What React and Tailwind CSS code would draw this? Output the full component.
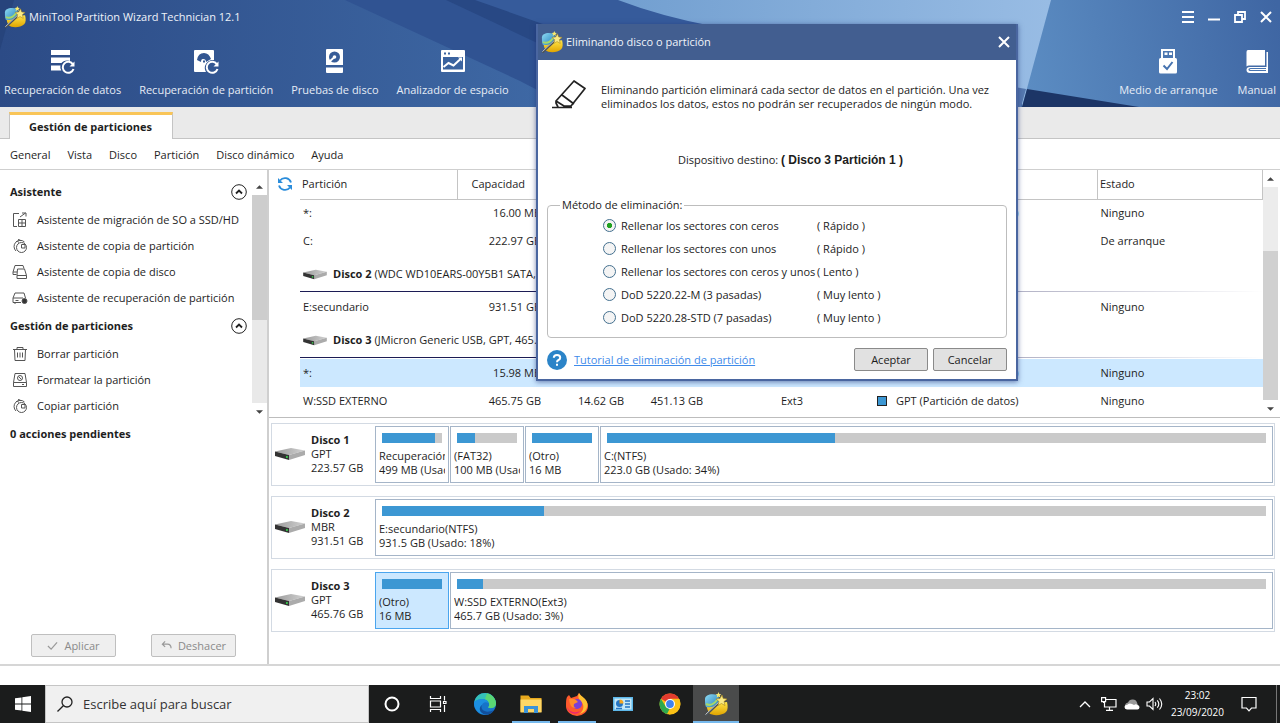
import React, { useState } from 'react'

const wizardItems = [
    { label: 'Asistente de migración de SO a SSD/HD', icon: 'migrate' },
    { label: 'Asistente de copia de partición', icon: 'pie' },
    { label: 'Asistente de copia de disco', icon: 'copyDisk' },
    { label: 'Asistente de recuperación de partición', icon: 'recover' },
]

const manageItems = [
    { label: 'Borrar partición', icon: 'trash' },
    { label: 'Formatear la partición', icon: 'format' },
    { label: 'Copiar partición', icon: 'pie' },
]

const menuItems = ['General', 'Vista', 'Disco', 'Partición', 'Disco dinámico', 'Ayuda']

const rows = [
    { name: '*:', size: '16.00 MB', type: 'GPT (Partición de datos)', status: 'Ninguno' },
    { name: 'C:', size: '222.97 GB', status: 'De arranque' },
    { disk: 'Disco 2', info: '(WDC WD10EARS-00Y5B1 SATA, MBR)' },
    { name: 'E:secundario', size: '931.51 GB', status: 'Ninguno' },
    { disk: 'Disco 3', info: '(JMicron Generic USB, GPT, 465.76 GB)' },
    { name: '*:', size: '15.98 MB', type: 'GPT (Partición de datos)', status: 'Ninguno', selected: true },
    { name: 'W:SSD EXTERNO', size: '465.75 GB', used: '14.62 GB', free: '451.13 GB', fs: 'Ext3', type: 'GPT (Partición de datos)', status: 'Ninguno' },
]

const disks = [
    {
        name: 'Disco 1', scheme: 'GPT', size: '223.57 GB',
        parts: [
            { title: 'Recuperación', text: '499 MB (Usado: 88%)', used: 88 },
            { title: '(FAT32)', text: '100 MB (Usado: 30%)', used: 30 },
            { title: '(Otro)', text: '16 MB', used: 100 },
            { title: 'C:(NTFS)', text: '223.0 GB (Usado: 34%)', used: 34.6, wide: true },
        ],
    },
    {
        name: 'Disco 2', scheme: 'MBR', size: '931.51 GB',
        parts: [{ title: 'E:secundario(NTFS)', text: '931.5 GB (Usado: 18%)', used: 18.3, wide: true }],
    },
    {
        name: 'Disco 3', scheme: 'GPT', size: '465.76 GB',
        parts: [
            { title: '(Otro)', text: '16 MB', used: 100, selected: true },
            { title: 'W:SSD EXTERNO(Ext3)', text: '465.7 GB (Usado: 3%)', used: 3.2, wide: true },
        ],
    },
]

const methods = [
    { id: 'zeros', label: 'Rellenar los sectores con ceros', speed: '( Rápido )' },
    { id: 'ones', label: 'Rellenar los sectores con unos', speed: '( Rápido )' },
    { id: 'both', label: 'Rellenar los sectores con ceros y unos', speed: '( Lento )' },
    { id: 'dod3', label: 'DoD 5220.22-M (3 pasadas)', speed: '( Muy lento )' },
    { id: 'dod7', label: 'DoD 5220.28-STD (7 pasadas)', speed: '( Muy lento )' },
]

const Logo = ({ className }) => (
    <svg viewBox="0 0 24 24" className={className} aria-hidden="true">
        <defs>
            <linearGradient id="logoBlue" x1="0" y1="0" x2="1" y2="1">
                <stop offset="0" stopColor="#8fdcf4" />
                <stop offset="1" stopColor="#1673b4" />
            </linearGradient>
            <linearGradient id="logoGold" x1="0" y1="0" x2="0" y2="1">
                <stop offset="0" stopColor="#ffe64a" />
                <stop offset="1" stopColor="#e0a400" />
            </linearGradient>
        </defs>
        <path d="M1 7c0-4 6-6 13-4l2 7-8 7-6-2c-1-2-1-5-1-8z" fill="url(#logoBlue)" />
        <path d="M3 15c4 1 8 0 11-4l9-1c1 4 1 8-1 10-4 4-14 4-17 1-1-2-2-4-2-6z" fill="url(#logoGold)" />
        <path d="M2 12c4 2 8 0 11-4" stroke="#a6d86a" strokeWidth="2" fill="none" />
        <path d="M1.500 23.500L17 9" stroke="#4c5256" strokeWidth="2.200" />
        <path d="M1.500 22.500L16 9" stroke="#dfe3e6" strokeWidth=".8" />
        <path d="M18 3l1.200 3.500 3.800.5-3 2.500 1 4-3.500-2-3.500 2 1-4-3-2.500 4-.5z" fill="#f9ea86" stroke="#a8861a" strokeWidth=".6" />
        <path d="M14.500 0l.8 2 2 .2-1.500 1.300.5 2-1.800-1.100-1.800 1.100.5-2-1.500-1.300 2-.2z" fill="#f9ea6e" />
    </svg>
)

const DiskIcon = ({ className }) => (
    <svg viewBox="0 0 30 14" className={className} aria-hidden="true">
        <defs>
            <linearGradient id="diskTop" x1="0" y1="0" x2="1" y2="0">
                <stop offset="0" stopColor="#9a9a9a" />
                <stop offset="1" stopColor="#d2d2d2" />
            </linearGradient>
        </defs>
        <path d="M0 4.500L16 1l14 2.500L14 8z" fill="url(#diskTop)" />
        <path d="M30 3.500V8L14 13V8z" fill="#ababab" />
        <path d="M0 4.500L14 8v5L0 9z" fill="#333" />
        <rect x="11" y="9" width="1.800" height="2" fill="#35c24a" />
    </svg>
)

const sideIcons = {
    migrate: (
        <>
            <path d="M7 1.500H1.500v13H5" />
            <path d="M6.500 7.500h7v7h-7zM10 7.500v7M6.500 11h7M8 5l5.500-4M10 1h4v3.500" />
        </>
    ),
    pie: (
        <>
            <path d="M4 13A6 6 0 1 1 12.500 4M4 3.500q2-.5 3 1M6 1.500q2 0 3 1.500" />
            <circle cx="9.500" cy="9.500" r="5" />
            <path d="M9.500 6.500v3.500h3.500v-3.500z" />
        </>
    ),
    copyDisk: (
        <>
            <path d="M4.500 10.500H1V8l2-6.500h8l1 3" />
            <path d="M5.500 5h7l2 6.500v3h-9.500v-3zM5 11.500h9.500M1 8h4" />
        </>
    ),
    recover: (
        <>
            <path d="M9 12.500H1V8l2-5h9l1.500 5M1 8h10M3 12.500v1.500M3.500 10.500h3" />
            <circle cx="12.500" cy="11" r="2.500" fill="#333" />
        </>
    ),
    trash: <path d="M1 3.500h14M5 3.500V1.500h6v2M2.500 3.500l.5 11h10l.5-11M5.500 6.500v5M8 6.500v5M10.500 6.500v5" />,
    format: (
        <>
            <path d="M3 1.500h10l1.500 9v4h-13v-4zM1.500 10.500h13M10 12.500h2" />
            <circle cx="8" cy="6" r="2.500" />
            <path d="M6.500 4.500l3 3" />
        </>
    ),
}

const SideIcon = ({ name }) => (
    <svg viewBox="0 0 16 16" className="w-4 h-4 shrink-0" fill="none" stroke="#555" strokeWidth="1" aria-hidden="true">
        {sideIcons[name]}
    </svg>
)

const toolIcons = {
    data: (
        <>
            <path d="M1 1h19v5H1zM1 8.500h19v3.500c-4-1-7 0-8.500 2H1zM1 16.500h9.500c-.5 2 0 3.500.8 5H1z" fill="#fff" />
            <path d="M23 15.500a5.500 5.500 0 1 0 .5 4.500" fill="none" stroke="#fff" strokeWidth="2" />
            <path d="M24.500 12.500v5h-5z" fill="#fff" />
        </>
    ),
    partition: (
        <>
            <path fillRule="evenodd" d="M2 1h18q1 0 1 1v9a8 8 0 0 0-8 12H2q-1 0-1-1V2q0-1 1-1zM4 11q1-7 7-7 5 0 7 6l-5 3q0-3-3-3-2 0-2 3zM10 11.500l2 0 0 2-2 0z" fill="#fff" />
            <path d="M24 15.500a5.500 5.500 0 1 0 .5 4.500" fill="none" stroke="#fff" strokeWidth="2" />
            <path d="M25.500 12.500v5h-5z" fill="#fff" />
        </>
    ),
    test: (
        <>
            <path fillRule="evenodd" d="M5 0h15q1 0 1 1v15H4V1q0-1 1-1zM12.500 2.500a5.500 5.500 0 1 0 0 11 5.500 5.500 0 0 0 0-11z" fill="#fff" />
            <circle cx="12.500" cy="8" r="1.800" fill="#fff" />
            <path d="M12 8.500L7 13" stroke="#fff" strokeWidth="1.800" />
            <path d="M4 18.500h17v4.500q0 1-1 1H5q-1 0-1-1z" fill="#fff" />
        </>
    ),
    space: (
        <>
            <path fillRule="evenodd" d="M2 1h22q1 0 1 1v20q0 1-1 1H2q-1 0-1-1V2q0-1 1-1zM3 8v12.500h20V8zM4 3.500v2h2v-2zM8 3.500v2h2v-2z" fill="#fff" />
            <path d="M3.500 18l5-4 5 2.500 7-6.500" fill="none" stroke="#fff" strokeWidth="2" />
            <path d="M18 8.500h4v4z" fill="#fff" />
        </>
    ),
    usb: (
        <>
            <path fillRule="evenodd" d="M6 0h14v9H6zM8 2v7h10V2z" fill="#fff" />
            <path d="M9.500 3.500h3v2.500h-3zM14 3.500h3v2.500h-3z" fill="#fff" />
            <path d="M5.500 9h15q1.500 0 1.500 1.500V23q0 1.500-1.500 1.500h-15Q4 24.500 4 23V10.500Q4 9 5.500 9z" fill="#fff" />
            <path d="M8.500 16.500l3.500 3.500 5.500-7" fill="none" stroke="#4673b0" strokeWidth="2" />
        </>
    ),
    manual: (
        <>
            <path d="M4 1h17v15.500H5q-1.500 0-2.500 1V3q0-2 1.500-2z" fill="#fff" />
            <path d="M22.500 3H24v21H6q-3.500 0-3.500-3 0-3 3.500-3h16.500z" fill="#fff" />
            <path d="M22 19.500H6.500q-1.500 0-1.500 1t1.500 1H22" fill="none" stroke="#4673b0" strokeWidth="1.200" />
        </>
    ),
}

const ToolButton = ({ icon, label }) => (
    <button className="flex flex-col items-center gap-[7px] whitespace-nowrap text-[11px] leading-4 text-[#e6ecf6]">
        <svg viewBox="0 0 26 26" className="w-[26px] h-[26px]" aria-hidden="true">{toolIcons[icon]}</svg>
        {label}
    </button>
)

const HeaderArt = () => (
    <svg viewBox="0 0 1280 107" preserveAspectRatio="none" className="absolute inset-0 w-full h-full" aria-hidden="true">
        <defs>
            <linearGradient id="artBase" gradientUnits="userSpaceOnUse" x1="0" y1="50" x2="540" y2="70">
                <stop offset="0" stopColor="#2c4b86" />
                <stop offset="1" stopColor="#3e68a4" />
            </linearGradient>
            <linearGradient id="artSky" gradientUnits="userSpaceOnUse" x1="620" y1="0" x2="1050" y2="0">
                <stop offset="0" stopColor="#729fd0" />
                <stop offset="1" stopColor="#98bce4" />
            </linearGradient>
            <linearGradient id="artRight" gradientUnits="userSpaceOnUse" x1="1025" y1="70" x2="1280" y2="20">
                <stop offset="0" stopColor="#5b8cc2" />
                <stop offset="1" stopColor="#3f66a3" />
            </linearGradient>
        </defs>
        <path d="M0 0h1060v107H0z" fill="url(#artBase)" />
        <path d="M0 0h14L0 50z" fill="#27447c" />
        <path d="M345 0h420v107H570L520 81z" fill="#305392" />
        <path d="M446 0h200v80h-30z" fill="#284884" />
        <path d="M475 0h250v60h-80z" fill="#365b9b" />
        <path d="M618 0Q660 16 712 26L900 70l122 22V107h30V0z" fill="url(#artSky)" />
        <path d="M1051 0h229v107H1022z" fill="url(#artRight)" />
        <path d="M1010 86l16 3-5 18h-11z" fill="#5578ae" />
        <path d="M1027 89l112 18H1022z" fill="#1c3566" />
    </svg>
)

const ScrollArrow = ({ down, label }) => (
    <button aria-label={label} className="h-[17px] w-full flex items-center justify-center">
        <svg viewBox="0 0 8 4" className="w-[7px] h-1" aria-hidden="true">
            <path d={down ? 'M0 0h8L4 4z' : 'M0 4h8L4 0z'} fill="#444" />
        </svg>
    </button>
)

const SideSection = ({ title, items }) => (
    <section>
        <h2 className="h-7 pl-[10px] pr-[5px] flex items-center justify-between font-bold">
            {title}
            <button aria-label={`Contraer ${title}`}>
                <svg viewBox="0 0 16 16" className="w-4 h-4" fill="none" stroke="#222" aria-hidden="true">
                    <circle cx="8" cy="8" r="7.300" />
                    <path d="M5 9.500l3-3 3 3" strokeWidth="1.800" />
                </svg>
            </button>
        </h2>
        <ul className="py-px">
            {items.map((item) => (
                <li key={item.label}>
                    <button className="h-[26px] pl-3 flex items-center gap-[9px] whitespace-nowrap">
                        <SideIcon name={item.icon} />
                        {item.label}
                    </button>
                </li>
            ))}
        </ul>
    </section>
)

const Sidebar = () => (
    <aside className="w-[269px] shrink-0 flex flex-col border-r-2 border-[#cfcfcf]">
        <div className="flex">
            <div className="flex-1 pt-2">
                <SideSection title="Asistente" items={wizardItems} />
                <SideSection title="Gestión de particiones" items={manageItems} />
            </div>
            <div className="w-[15px] pt-2 flex flex-col">
                <ScrollArrow label="Subir" />
                <div className="flex-1 bg-[#e9e9e9]">
                    <div className="h-3/5 bg-[#cdcdcd]" />
                </div>
                <ScrollArrow down label="Bajar" />
            </div>
        </div>
        <p className="h-7 pl-[10px] flex items-center font-bold">0 acciones pendientes</p>
        <div className="mt-auto mb-[7px] pl-[31px] pr-[31px] flex justify-between text-[#8a8a8a]">
            <button disabled className="w-[85px] h-[23px] flex items-center justify-center gap-[6px] rounded-xs border border-[#bfbfbf] bg-[#efefef]">
                <svg viewBox="0 0 12 12" className="w-[11px] h-[11px]" fill="none" stroke="#999" strokeWidth="1.300" aria-hidden="true">
                    <path d="M1 6.500l3.500 3.500L11 2.500" />
                </svg>
                Aplicar
            </button>
            <button disabled className="w-[85px] h-[23px] flex items-center justify-center gap-[6px] rounded-xs border border-[#bfbfbf] bg-[#efefef]">
                <svg viewBox="0 0 12 12" className="w-[11px] h-[11px]" fill="none" stroke="#999" strokeWidth="1.300" aria-hidden="true">
                    <path d="M4.500 1.500L1.500 4.500l3 3M1.500 4.500H7q4 0 4 4.500" />
                </svg>
                Deshacer
            </button>
        </div>
    </aside>
)

const PartitionTable = () => (
    <div className="flex border-b border-[#bdbdbd]">
        <button aria-label="Actualizar" className="w-[31px] pt-[6px] self-start flex justify-center">
            <svg viewBox="0 0 16 16" className="w-4 h-4" fill="none" stroke="#2b8ddb" strokeWidth="1.800" aria-hidden="true">
                <path d="M14 6.500A6.300 6.300 0 0 0 3 4.500M2 9.500a6.300 6.300 0 0 0 11 2" />
                <path d="M1 2v5h5zM15 14V9h-5z" fill="#2b8ddb" stroke="none" />
            </svg>
        </button>
        <table className="flex-1 table-fixed border-collapse whitespace-nowrap mb-[2px]">
            <colgroup>
                <col className="w-[157px]" />
                <col className="w-[84px]" />
                <col className="w-[83px]" />
                <col className="w-[79px]" />
                <col className="w-[170px]" />
                <col />
                <col className="w-[165px]" />
            </colgroup>
            <thead>
                <tr className="h-[29px] border-b border-[#c4c4c4] text-left">
                    <th className="font-normal pl-[2px] border-r border-[#c4c4c4]">Partición</th>
                    <th className="font-normal pl-[14px]">Capacidad</th>
                    <td />
                    <td />
                    <td />
                    <td />
                    <th className="font-normal pl-[2px] border-x border-[#c4c4c4]">Estado</th>
                </tr>
            </thead>
            <tbody>
                {rows.map((row, i) => row.disk ? (
                    <tr key={i} className="h-[38px]">
                        <td colSpan={7} className="p-0">
                            <div className="h-9 pt-[2px] pl-[3px] flex items-center gap-[6px]">
                                <DiskIcon className="w-6 h-[11px]" />
                                <span><b>{row.disk}</b> {row.info}</span>
                            </div>
                            <div className="h-px mb-px bg-linear-to-r from-[#1c1c55] from-25% to-transparent" />
                        </td>
                    </tr>
                ) : (
                    <tr key={i} className={row.selected ? 'h-7 bg-[#cce8ff]' : 'h-7'}>
                        <td className="pl-[3px]">{row.name}</td>
                        <td className="text-right">{row.size}</td>
                        <td className="text-right">{row.used}</td>
                        <td className="text-right">{row.free}</td>
                        <td className="pl-[78px]">{row.fs}</td>
                        <td>
                            {row.type && (
                                <span className="flex items-center gap-[9px] pl-1">
                                    <i className="w-[10px] h-[10px] border border-[#222] bg-[#3c97d3]" />
                                    {row.type}
                                </span>
                            )}
                        </td>
                        <td className="pl-[3px]">{row.status}</td>
                    </tr>
                ))}
            </tbody>
        </table>
        <div className="w-[15px] mr-[2px] flex flex-col">
            <ScrollArrow label="Subir" />
            <div className="flex-1 bg-[#ececec] flex flex-col justify-end">
                <div className="h-[70%] bg-[#d0d0d0]" />
            </div>
            <ScrollArrow down label="Bajar" />
        </div>
    </div>
)

const DiskMap = () => (
    <div className="pt-[5px] pl-[2px] pr-[5px] flex flex-col gap-[10px]">
        {disks.map((disk) => (
            <section key={disk.name} className="flex border border-[#d3dae3] p-[2px] pr-px">
                <div className="w-[101px] pl-px pb-[2px] flex items-center gap-[6px] leading-[14px]">
                    <DiskIcon className="w-[30px] h-[14px]" />
                    <p><b>{disk.name}</b><br />{disk.scheme}<br />{disk.size}</p>
                </div>
                <div className="flex-1 min-w-0 flex gap-px">
                    {disk.parts.map((part) => (
                        <div
                            key={part.title}
                            className={`h-[57px] border pt-[6px] overflow-hidden whitespace-nowrap ${part.wide ? 'flex-1' : 'w-[74px]'} ${part.selected ? 'border-[#4aa5ee] bg-[#cce8ff]' : 'border-[#a5b5c8]'}`}
                        >
                            <div className="h-[10px] mx-[6px] mb-[6px] bg-[#cacaca]">
                                <div className="h-full bg-[#3c97d3]" style={{ width: `${part.used}%` }} />
                            </div>
                            <p className="mx-[3px] overflow-hidden leading-[14px]">{part.title}<br />{part.text}</p>
                        </div>
                    ))}
                </div>
            </section>
        ))}
    </div>
)

const DeleteDialog = () => {
    const [method, setMethod] = useState('zeros')

    return (
        <div role="dialog" aria-labelledby="dialog-title" className="absolute left-[536px] top-6 w-[482px] border-2 border-t-0 border-[#4a66a0] bg-white text-[#1c1c1c] shadow-[0_1px_5px_rgba(30,50,120,0.6)]">
            <header className="h-9 pl-[3px] pr-[6px] flex items-center bg-[#425e90] text-[#f0f4fa]">
                <Logo className="w-[22px] h-[22px] mr-[3px]" />
                <h1 id="dialog-title" className="flex-1">Eliminando disco o partición</h1>
                <button aria-label="Cerrar">
                    <svg viewBox="0 0 12 12" className="w-3 h-3" stroke="#fff" strokeWidth="2" aria-hidden="true">
                        <path d="M1 1l10 10M11 1L1 11" />
                    </svg>
                </button>
            </header>
            <div className="px-[9px] pb-2">
                <div className="pt-[19px] pl-[5px] flex gap-[15px]">
                    <svg viewBox="0 0 34 30" className="w-[34px] h-[30px]" fill="none" stroke="#222" strokeWidth="1.700" strokeLinejoin="round" aria-hidden="true">
                        <path d="M22 2L33 9.500 19 27h-7L4 22zM10 16l12 9M4 22v2l2 4M0 28.500h20" />
                    </svg>
                    <p className="pt-1 leading-[14px]">
                        Eliminando partición eliminará cada sector de datos en el partición. Una vez<br />
                        eliminados los datos, estos no podrán ser recuperados de ningún modo.
                    </p>
                </div>
                <p className="mt-[41px] pl-[131px] leading-4">
                    Dispositivo destino: <b className="font-['Liberation_Sans',sans-serif] text-[12px]">( Disco 3 Partición 1 )</b>
                </p>
                <fieldset className="mt-[29px] pl-[55px] pt-px pb-2 rounded-[4px] border border-[#bdbdbd]">
                    <legend className="-ml-[43px] px-[2px] leading-4">Método de eliminación:</legend>
                    {methods.map((m) => (
                        <div key={m.id} className="h-[23px] flex items-center">
                            <input
                                type="radio"
                                name="method"
                                id={m.id}
                                checked={method === m.id}
                                onChange={() => setMethod(m.id)}
                                className="appearance-none w-[13px] h-[13px] rounded-full border border-[#44708f] bg-[#f4f4f4] checked:bg-[radial-gradient(circle,#21a121_30%,#f4f4f4_38%)]"
                            />
                            <label htmlFor={m.id} className="pl-[5px] w-[201px]">{m.label}</label>
                            <span>{m.speed}</span>
                        </div>
                    ))}
                </fieldset>
                <div className="mt-[10px] flex items-center">
                    <svg viewBox="0 0 20 20" className="w-5 h-5 mr-[7px]" aria-hidden="true">
                        <circle cx="10" cy="10" r="10" fill="#2b84c8" />
                        <path d="M6.800 7.800Q6.800 5 10 5t3.200 2.700Q13.200 9.300 11.500 10 10 10.700 10 12.300M10 13.800v2" fill="none" stroke="#fff" strokeWidth="2" />
                    </svg>
                    <a href="#tutorial" className="flex-1 underline text-[#3f8bea]">Tutorial de eliminación de partición</a>
                    <button className="w-[74px] h-[23px] mr-[5px] rounded-xs border border-[#8a8a8a] bg-[#e1e1e1]">Aceptar</button>
                    <button className="w-[74px] h-[23px] rounded-xs border border-[#8a8a8a] bg-[#e1e1e1]">Cancelar</button>
                </div>
            </div>
        </div>
    )
}

const taskIcons = [
    {
        name: 'Cortana',
        art: <circle cx="12" cy="12" r="6.500" fill="none" stroke="#fff" strokeWidth="2" />,
    },
    {
        name: 'Vista de tareas',
        art: <path d="M4.500 4v2.500h10V4M4.500 9h10v6h-10zM4.500 20v-2.500h10V20M18.500 4v4.500M18.500 13v7M17.500 9.500h2.500v2h-2.500z" fill="none" stroke="#fff" strokeWidth="1.200" />,
    },
    {
        name: 'Edge',
        art: (
            <>
                <circle cx="12" cy="12" r="11" fill="#1673c9" />
                <path d="M1.200 10A11 11 0 0 1 23 11c0 5-5 6-8 4.500 1-1 1.500-2 1-4C15 8 9 5 1.200 10z" fill="#35c1b8" />
                <path d="M14 1.300A11 11 0 0 1 23 11c0 4-3 5.500-6 5-2 0-2-1-1-2 1-3-1-6-4-7z" fill="#5bd673" />
                <path d="M1.200 10C7 5 14 7 15.500 11c-3-2-7 0-7 4 0 3 3 6 7 7A11 11 0 0 1 1.200 10z" fill="#1c8fe0" />
                <path d="M9 13c-2 5 4 9 12 5-3 5-9 6-12 3-3-2-3-6 0-8z" fill="#124f9c" />
            </>
        ),
    },
    {
        name: 'Explorador de archivos',
        open: true,
        art: (
            <>
                <path d="M1.500 3.500h8l2 2.500h11v14h-21z" fill="#e8a91d" />
                <path d="M1.500 7.500h21v13h-21z" fill="#ffd766" />
                <path d="M5 21v-7h14v7h-4v-4H9v4z" fill="#3b93d8" />
            </>
        ),
    },
    {
        name: 'Firefox',
        open: true,
        art: (
            <>
                <path d="M2 5l2-2 2 3 6-2 2-3q2 3 4 5c4 3 5 6 5 8a11 10 0 0 1-22 0C1 10 1 7 2 5z" fill="#ff5a2d" />
                <path d="M14 1c1 3 8 5 8.500 11 0 6-4 9-8 10 5-4 5-10 1-13-2-2-3-5-1.500-8z" fill="#ffc130" />
                <path d="M2 15c2 5 8 7 13 4-2 4-11 4-13-4z" fill="#e8207c" />
                <circle cx="12" cy="12" r="5" fill="#7b3fd6" />
                <path d="M4 7c4-1 7 0 9 3l-4 2q-1 3 2 4-6 1-7-9z" fill="#ff8d28" />
            </>
        ),
    },
    {
        name: 'Panel de control',
        art: (
            <>
                <path d="M2 5h20v14H2z" fill="#5db8ea" />
                <path d="M3.500 6.500h17v11h-17z" fill="#c3e7f8" />
                <circle cx="8.500" cy="11.500" r="3.500" fill="#2475c4" />
                <path d="M8.500 11.500V7.500a4 4 0 0 1 4 4z" fill="#f6a51f" />
                <path d="M14 9h5M14 12h5M14 15h5M5 16.500h6" stroke="#2475c4" strokeWidth="1.300" />
            </>
        ),
    },
    {
        name: 'Chrome',
        art: (
            <>
                <circle cx="12" cy="12" r="10.500" fill="#fbc116" />
                <path d="M12 12L2.900 6.700A10.500 10.500 0 0 1 21.100 6.700H12z" fill="#e33b2e" />
                <path d="M2.900 6.700L8 15l4 1-3 6A10.500 10.500 0 0 1 2.900 6.700z" fill="#2da94f" />
                <path d="M12 7h9.300q3 8-3 13.300-3 2.200-7.500 2.100L16 14z" fill="#fbc116" />
                <circle cx="12" cy="12" r="5" fill="#fff" />
                <circle cx="12" cy="12" r="3.900" fill="#3f82ee" />
            </>
        ),
    },
]

const Taskbar = () => (
    <footer className="h-[38px] shrink-0 flex bg-[#1b1c1c] text-white">
        <button aria-label="Inicio" className="w-[45px] flex items-center justify-center">
            <svg viewBox="0 0 16 16" className="w-4 h-4" aria-hidden="true">
                <path d="M0 2.300L6.500 1.400v6.200H0zM7.300 1.300L16 0v7.600H7.300zM0 8.400h6.500v6.200L0 13.700zM7.300 8.400H16V16l-8.700-1.300z" fill="#fff" />
            </svg>
        </button>
        <div className="w-[324px] pl-[11px] flex items-center gap-[10px] border border-[#c5c5c5] bg-[#f0f0f0]">
            <svg viewBox="0 0 16 16" className="w-4 h-4" fill="none" stroke="#222" strokeWidth="1.300" aria-hidden="true">
                <circle cx="10" cy="6" r="5" />
                <path d="M6.300 9.700L.5 15.500" />
            </svg>
            <input aria-label="Buscar" placeholder="Escribe aquí para buscar" className="flex-1 min-w-0 text-[13px] outline-none placeholder:text-[#333]" />
        </div>
        <div className="w-[370px] grid grid-cols-8">
            {taskIcons.map((app) => (
                <button key={app.name} aria-label={app.name} className="flex flex-col items-center">
                    <span className="flex-1 pt-[2px] flex items-center">
                        <svg viewBox="0 0 24 24" className="w-6 h-6" aria-hidden="true">{app.art}</svg>
                    </span>
                    <i className={app.open ? 'h-[2px] w-[38px] bg-[#76b9ed]' : 'h-[2px]'} />
                </button>
            ))}
            <button aria-label="MiniTool Partition Wizard" className="flex flex-col items-center bg-[#4a4b4b]">
                <span className="flex-1 pt-[2px] flex items-center"><Logo className="w-6 h-6" /></span>
                <i className="h-[2px] w-full bg-[#76b9ed]" />
            </button>
        </div>
        <div className="ml-auto flex items-center">
            <svg viewBox="0 0 12 12" className="w-3 h-3 mr-[10px]" fill="none" stroke="#fff" strokeWidth="1.300" aria-hidden="true">
                <path d="M1 9l5-5 5 5" />
            </svg>
            <svg viewBox="0 0 16 16" className="w-4 h-4 mr-[7px]" fill="none" stroke="#fff" strokeWidth="1.200" aria-hidden="true">
                <path d="M5 3.500h10v7.500H3.500V6M.6 1.600h4v4h-4zM8.500 11v3M5 14.400h7M2.600 5.600V7" />
            </svg>
            <svg viewBox="0 0 16 12" className="w-4 h-3 mr-[6px]" aria-hidden="true">
                <path d="M1 8q0-3 3-3.500Q5.500 1 9 1.500q3 0 4 3l1 3-7 2z" fill="#9a9a9a" />
                <path d="M3 11.500q-2.500-.3-2.500-2.500T3 7q2-2.500 5-1l2 1q2-1.500 3.500 0 2.200.3 2 2.500-.2 2-2 2z" fill="#fff" />
            </svg>
            <svg viewBox="0 0 17 14" className="w-[17px] h-[14px] mr-2" fill="none" stroke="#fff" strokeWidth="1.100" aria-hidden="true">
                <path d="M1 5h2.500L7 1.500v11L3.500 9H1zM9 5q1.500 2 0 4M11.300 3.300q3 3.700 0 7.400M13.500 1.500q4.500 5.500 0 11" />
            </svg>
            <time className="text-center text-[10px] leading-[17px]">23:02<br />23/09/2020</time>
            <svg viewBox="0 0 16 16" className="w-4 h-4 ml-[17px] mr-[19px]" fill="none" stroke="#fff" strokeWidth="1.200" aria-hidden="true">
                <path d="M1 1.500h14v10.500h-4.500L8 14.800 5.500 12H1z" />
            </svg>
            <i className="w-px h-[38px] mr-[3px] bg-[#777]" />
        </div>
    </footer>
)

const App = () => {
    return (
        <div className="relative min-h-screen flex flex-col bg-white font-['Open_Sans','Noto_Sans',sans-serif] text-[11px] leading-4 text-[#1e1e1e]">
            <header className="relative h-[107px]">
                <HeaderArt />
                <div className="relative h-full flex flex-col">
                    <div className="h-[33px] pl-1 pr-2 flex items-center text-[#eef2f9]">
                        <Logo className="w-[22px] h-[22px] mr-[3px]" />
                        <span className="flex-1">MiniTool Partition Wizard Technician 12.1</span>
                        <div className="flex items-center gap-[14px]">
                            <button aria-label="Menú">
                                <svg viewBox="0 0 12 12" className="w-3 h-3" stroke="#fff" strokeWidth="1.800" aria-hidden="true"><path d="M0 1h12M0 6h12M0 11h12" /></svg>
                            </button>
                            <button aria-label="Minimizar">
                                <svg viewBox="0 0 12 12" className="w-3 h-3" stroke="#fff" strokeWidth="2" aria-hidden="true"><path d="M0 8.500h12" /></svg>
                            </button>
                            <button aria-label="Restaurar">
                                <svg viewBox="0 0 12 12" className="w-3 h-3" fill="none" stroke="#fff" strokeWidth="1.800" aria-hidden="true"><path d="M1 4h7v7H1zM4 3.500V1h7v7H8.500" /></svg>
                            </button>
                            <button aria-label="Salir">
                                <svg viewBox="0 0 12 12" className="w-3 h-3" stroke="#fff" strokeWidth="2" aria-hidden="true"><path d="M1 1l10 10M11 1L1 11" /></svg>
                            </button>
                        </div>
                    </div>
                    <div className="pt-4 pl-1 pr-1 flex justify-between">
                        <div className="flex gap-[18px]">
                            <ToolButton icon="data" label="Recuperación de datos" />
                            <ToolButton icon="partition" label="Recuperación de partición" />
                            <ToolButton icon="test" label="Pruebas de disco" />
                            <ToolButton icon="space" label="Analizador de espacio" />
                        </div>
                        <div className="flex gap-[20px]">
                            <ToolButton icon="usb" label="Medio de arranque" />
                            <ToolButton icon="manual" label="Manual" />
                        </div>
                    </div>
                </div>
            </header>

            {/* Tabs */}
            <div className="h-8 pl-[9px] flex items-end bg-[#eaeaea] border-b border-[#c4c4c4]">
                <button className="w-[164px] h-[27px] -mb-px pr-[1px] border border-b-0 border-t-3 border-[#c4c4c4] border-t-[#f9c558] bg-white font-bold">
                    Gestión de particiones
                </button>
            </div>

            {/* Menu bar */}
            <nav className="h-[31px] pt-px pl-[10px] flex items-center gap-[17px] border-b border-[#cfcfcf]">
                {menuItems.map((item) => <button key={item}>{item}</button>)}
            </nav>

            <main className="flex-1 flex border-b-2 border-[#d6d6d6] mb-[19px]">
                <Sidebar />
                <div className="flex-1 min-w-0">
                    <PartitionTable />
                    <DiskMap />
                </div>
            </main>

            <Taskbar />
            <DeleteDialog />
        </div>
    )
}

export default App
